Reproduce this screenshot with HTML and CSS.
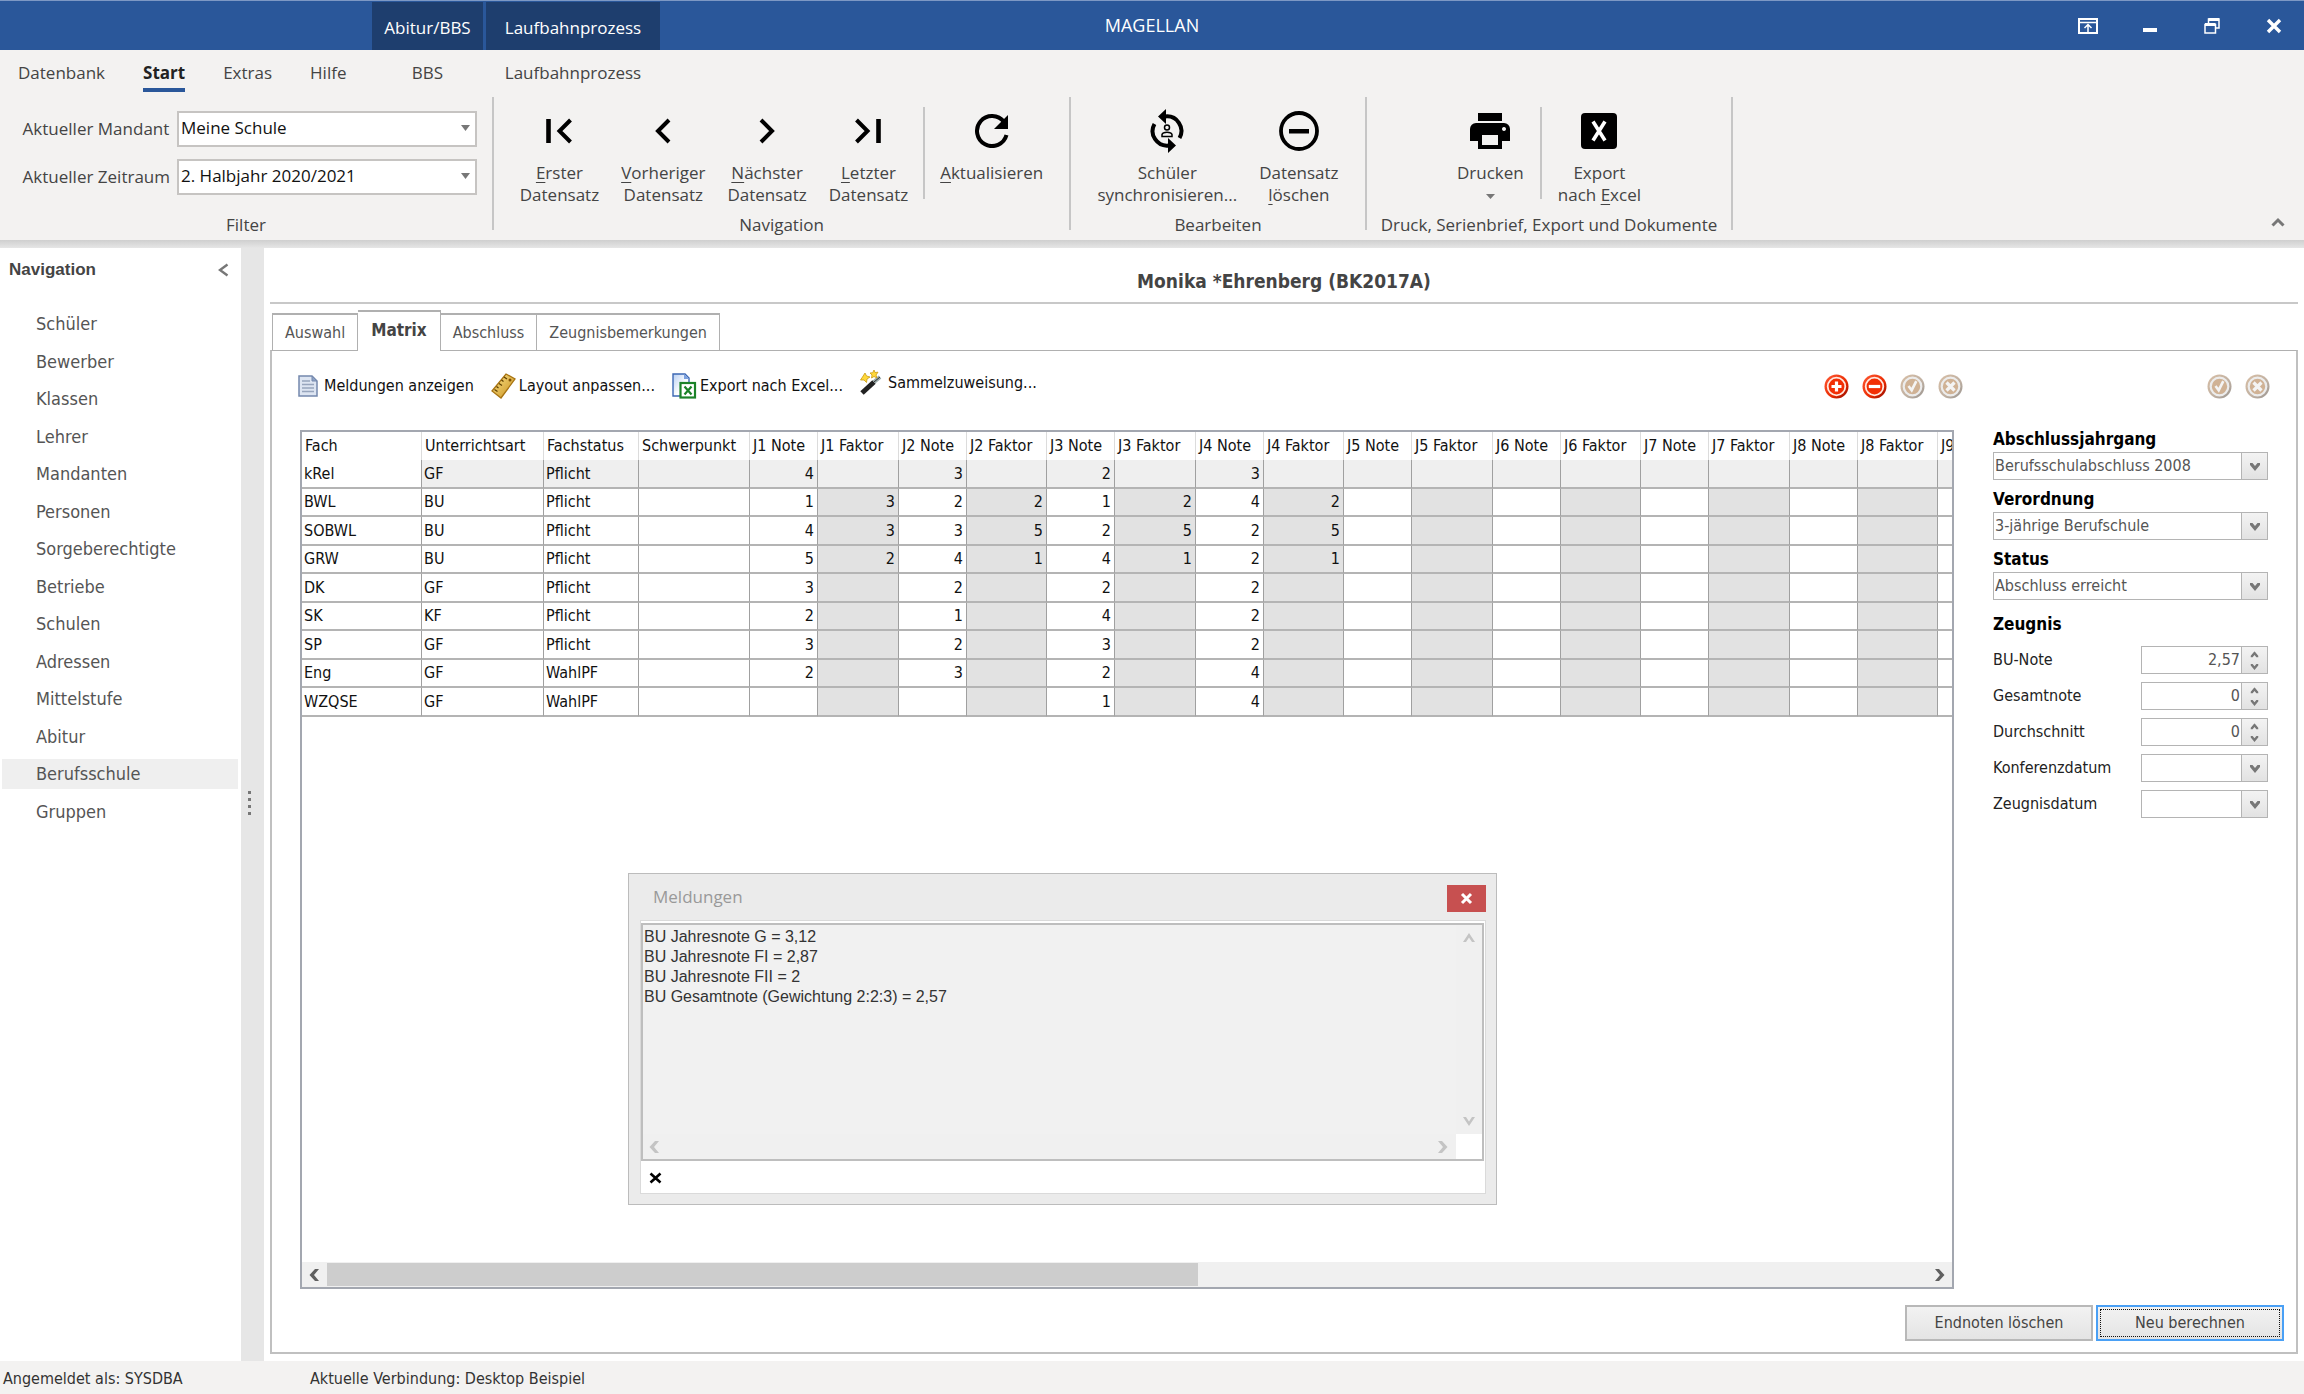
FILE: index.html
```
<!DOCTYPE html>
<html lang="de">
<head>
<meta charset="utf-8">
<title>MAGELLAN</title>
<link rel="stylesheet" href="styles.css">
</head>
<body>
<svg class="defs" aria-hidden="true">
  <defs>
    <linearGradient id="red" x1="0" y1="0" x2="1" y2="1"><stop offset="0" stop-color="#ff5a36"/><stop offset=".6" stop-color="#ea2a00"/><stop offset="1" stop-color="#8c0a00"/></linearGradient>
    <linearGradient id="tan" x1="0" y1="0" x2="1" y2="1"><stop offset="0" stop-color="#d9bfa5"/><stop offset=".6" stop-color="#bfb0a2"/><stop offset="1" stop-color="#97928e"/></linearGradient>
    <linearGradient id="gold" x1="0" y1="0" x2="1" y2="1"><stop offset="0" stop-color="#fbe48a"/><stop offset="1" stop-color="#c98f1c"/></linearGradient>
    <linearGradient id="sheet" x1="0" y1="0" x2="1" y2="1"><stop offset="0" stop-color="#b9d0f2"/><stop offset=".6" stop-color="#ffffff"/></linearGradient>
    <symbol id="add" viewBox="0 0 25 25"><circle cx="12.500" cy="12.500" r="12" fill="url(#red)"/><circle cx="12.500" cy="12.500" r="8.800" fill="#f22f05" stroke="#ffe9e0" stroke-width="1.800"/><path d="M12.500 7.500v10M7.500 12.500h10" stroke="#fff" stroke-width="3.200"/></symbol>
    <symbol id="remove" viewBox="0 0 25 25"><circle cx="12.500" cy="12.500" r="12" fill="url(#red)"/><circle cx="12.500" cy="12.500" r="8.800" fill="#f22f05" stroke="#ffe9e0" stroke-width="1.800"/><path d="M6.800 12.500h11.400" stroke="#fff" stroke-width="3.200"/></symbol>
    <symbol id="ok" viewBox="0 0 25 25"><circle cx="12.500" cy="12.500" r="12" fill="url(#tan)"/><circle cx="12.500" cy="12.500" r="8.800" fill="#d0b295" stroke="#ececec" stroke-width="2.200"/><path d="M8.500 12l3.200 4.200 4.600-9" fill="none" stroke="#f4f4f4" stroke-width="2.600"/></symbol>
    <symbol id="no" viewBox="0 0 25 25"><circle cx="12.500" cy="12.500" r="12" fill="url(#tan)"/><circle cx="12.500" cy="12.500" r="8.800" fill="#d0b295" stroke="#ececec" stroke-width="2.200"/><path d="M8.500 8.500l8 8M16.500 8.500l-8 8" stroke="#f4f4f4" stroke-width="3.200"/></symbol>
    <symbol id="down" viewBox="0 0 12 9"><path d="M1 1h2.500L6 4l2.500-3H11v2L6 9 1 3z" fill="#777"/></symbol>
    <symbol id="left" viewBox="0 0 10 12"><path d="M6 0h4L5 6l5 6H6L.5 6z" fill="currentColor"/></symbol>
  </defs>
</svg>

<header class="titlebar">
  <div class="context-tabs"><span class="ctx ctx-a">Abitur/BBS</span><span class="ctx ctx-b">Laufbahnprozess</span></div>
  <h1 class="app-name">MAGELLAN</h1>
  <div class="window-controls">
    <button aria-label="Menüband anzeigen"><svg width="20" height="16" viewBox="0 0 20 16" fill="none" stroke="#fff"><path d="M1 1h18v14H1z" stroke-width="2"/><path d="M1 4.500h18M10 14V7M6.500 10L10 6.500 13.500 10" stroke-width="1.500"/></svg></button>
    <button aria-label="Minimieren"><svg width="14" height="16"><path d="M0 10h14v4H0z" fill="#fff"/></svg></button>
    <button aria-label="Verkleinern"><svg width="16" height="16" viewBox="0 0 16 16" fill="none" stroke="#fff" stroke-width="1.500"><path d="M1 6.500h10.500V15H1zM4.500 6V1H15v9h-3.500"/><path d="M1 6.500h10.500M4.500 1.500H15" stroke-width="3"/></svg></button>
    <button aria-label="Schließen"><svg width="16" height="16"><path d="M2 2l12 12M14 2L2 14" stroke="#fff" stroke-width="3.400"/></svg></button>
  </div>
</header>

<nav class="menu" aria-label="Menüband">
  <div class="menu-main"><a href="#">Datenbank</a><a href="#" class="active">Start</a><a href="#">Extras</a><a href="#">Hilfe</a></div>
  <a href="#" class="ctx-a">BBS</a><a href="#" class="ctx-b">Laufbahnprozess</a>
</nav>

<section class="ribbon">
  <div class="group group-filter">
    <div class="filters">
      <label for="mandant">Aktueller Mandant</label>
      <div class="combo"><select id="mandant"><option>Meine Schule</option></select><svg width="9" height="6"><path d="M0 0h9L4.500 6z" fill="#777"/></svg></div>
      <label for="zeitraum">Aktueller Zeitraum</label>
      <div class="combo"><select id="zeitraum"><option>2. Halbjahr 2020/2021</option></select><svg width="9" height="6"><path d="M0 0h9L4.500 6z" fill="#777"/></svg></div>
    </div>
    <div class="group-label">Filter</div>
  </div>
  <span class="rule"></span>
  <div class="group group-nav">
    <div class="tools">
      <button class="tool"><svg width="26" height="26" fill="none" stroke="#000"><path d="M2.500 1v24" stroke-width="4.600"/><path d="M24.500 2L13.500 13l11 11" stroke-width="4"/></svg><span><u>E</u>rster<br>Datensatz</span></button>
      <button class="tool"><svg width="16" height="26" fill="none" stroke="#000"><path d="M14 2L3 13l11 11" stroke-width="4"/></svg><span><u>V</u>orheriger<br>Datensatz</span></button>
      <button class="tool"><svg width="16" height="26" fill="none" stroke="#000"><path d="M2 2l11 11L2 24" stroke-width="4"/></svg><span><u>N</u>ächster<br>Datensatz</span></button>
      <button class="tool"><svg width="26" height="26" fill="none" stroke="#000"><path d="M23.500 1v24" stroke-width="4.600"/><path d="M1.500 2l11 11-11 11" stroke-width="4"/></svg><span><u>L</u>etzter<br>Datensatz</span></button>
      <span class="rule rule-small"></span>
      <button class="tool"><svg width="34" height="34" viewBox="0 0 34 34"><path d="M29 8A15 15 0 1 0 31.500 21" fill="none" stroke="#000" stroke-width="4"/><path d="M33 1v14H19z"/></svg><span><u>A</u>ktualisieren</span></button>
    </div>
    <div class="group-label">Navigation</div>
  </div>
  <span class="rule"></span>
  <div class="group group-edit">
    <div class="tools">
      <button class="tool"><svg width="34" height="44" viewBox="0 0 34 44"><g fill="none" stroke="#000" stroke-width="4"><path d="M15 7.500A14.500 14.500 0 0 1 29.500 29"/><path d="M19 36.500A14.500 14.500 0 0 1 4.500 15"/></g><path d="M16 0v15L8 7.500zM18 29v15l8-7.500z"/><g fill="none" stroke="#000" stroke-width="1.500"><circle cx="17" cy="18.500" r="2.500"/><path d="M12 27.500v-2c1-3 9-3 10 0v2z"/></g></svg><span>Schüler<br>synchronisieren...</span></button>
      <button class="tool"><svg width="40" height="40" viewBox="0 0 40 40"><circle cx="20" cy="20" r="18" fill="none" stroke="#000" stroke-width="3.800"/><path d="M10 18h20v4.500H10z"/></svg><span>Datensatz<br><u>l</u>öschen</span></button>
    </div>
    <div class="group-label">Bearbeiten</div>
  </div>
  <span class="rule"></span>
  <div class="group group-print">
    <div class="tools">
      <button class="tool"><svg width="40" height="36" viewBox="0 0 40 36"><path fill-rule="evenodd" d="M8 0h24v8H8zM6 10h28a6 6 0 0 1 6 6v12h-8v8H8v-8H0V16a6 6 0 0 1 6-6zm6 12v10h16V22zM34 14a2 2 0 1 0 .01 0z"/></svg><span>Drucken</span><svg class="caret" width="9" height="5"><path d="M0 0h9L4.500 5z" fill="#777"/></svg></button>
      <span class="rule rule-small"></span>
      <button class="tool"><svg width="36" height="36" viewBox="0 0 36 36"><rect width="36" height="36" rx="4"/><path d="M12 8.500l12 19M24 8.500l-12 19" stroke="#fff" stroke-width="3.600"/></svg><span>Export<br>nach <u>E</u>xcel</span></button>
    </div>
    <div class="group-label">Druck, Serienbrief, Export und Dokumente</div>
  </div>
  <span class="rule"></span>
  <button class="collapse" aria-label="Menüband reduzieren"><svg width="14" height="10"><path d="M1.500 8.500L7 3l5.500 5.500" fill="none" stroke="#777" stroke-width="3"/></svg></button>
</section>

<div class="workspace">
  <aside class="sidebar">
    <div class="sidebar-head"><h2>Navigation</h2><button aria-label="Navigation einklappen"><svg width="11" height="14"><path d="M9.500 1.500L2 7l7.500 5.500" fill="none" stroke="#777" stroke-width="2.400"/></svg></button></div>
    <nav class="modules" aria-label="Module">
      <a href="#">Schüler</a><a href="#">Bewerber</a><a href="#">Klassen</a><a href="#">Lehrer</a><a href="#">Mandanten</a><a href="#">Personen</a><a href="#">Sorgeberechtigte</a><a href="#">Betriebe</a><a href="#">Schulen</a><a href="#">Adressen</a><a href="#">Mittelstufe</a><a href="#">Abitur</a><a href="#" class="selected">Berufsschule</a><a href="#">Gruppen</a>
    </nav>
  </aside>
  <div class="splitter"><span></span><span></span><span></span><span></span></div>

  <main class="content">
    <h2 class="person">Monika *Ehrenberg (BK2017A)</h2>
    <div class="tabs" role="tablist">
      <button role="tab">Auswahl</button><button role="tab" class="current" aria-selected="true">Matrix</button><button role="tab">Abschluss</button><button role="tab">Zeugnisbemerkungen</button>
    </div>
    <section class="panel">
      <div class="toolbar">
        <button class="action"><svg width="26" height="26" viewBox="0 0 26 26"><path d="M1 3h13l5 5v15H1z" fill="#dde5f2" stroke="#7488ad" stroke-width="1.500"/><path d="M14 3v5h5z" fill="#8ea3c6" stroke="#7488ad"/><path d="M4 8h8M4 11.500h12M4 15h12M4 18.500h12" stroke="#97a5bd" stroke-width="1.400"/></svg>Meldungen anzeigen</button>
        <button class="action"><svg width="28" height="26" viewBox="0 0 28 26"><path d="M15 1l9 5-14 19-9-7z" fill="url(#gold)" stroke="#a87412" stroke-width="1.300"/><path d="M13 4l3 2M10.500 7l2 1.500M8 10.500l3 2M5.500 13.500l2 1.500M3.500 16.500l3 2" stroke="#604000" stroke-width="1.300"/><circle cx="19" cy="7" r="1.500" fill="#805000"/></svg>Layout anpassen...</button>
        <button class="action"><svg width="28" height="26" viewBox="0 0 28 26"><path d="M1 1h12l4 4v18H1z" fill="url(#sheet)" stroke="#3d68b4" stroke-width="1.400"/><path d="M12 1l5 5h-5z" fill="#7ba0de"/><rect x="8.500" y="10" width="14.500" height="14.500" fill="#fff" stroke="#1b8228" stroke-width="2.200"/><path d="M12.500 13.500l7 8M19.500 13.500l-7 8" stroke="#1b8228" stroke-width="2.200"/></svg>Export nach Excel...</button>
        <button class="action action-raised"><svg width="28" height="26" viewBox="0 0 28 26"><path d="M2 23L14 12" stroke="#222" stroke-width="5"/><path d="M14 12l6-5" stroke="#9aa" stroke-width="4"/><path d="M14 12l6-5" stroke="#333" stroke-width="1"/><g fill="#ffd83a" stroke="#c99b12" stroke-width=".8"><path d="M5 3l1.500 3L10 7 7 9l-.5 3.500L4 10 .5 10l2-3z"/><path d="M14 0l1 2.500 3-.3L16 5l1 3-3-1.500L11.500 8l.5-3-2-2 2.700-.3z"/></g></svg>Sammelzuweisung...</button>
        <div class="rounds rounds-grid">
          <button aria-label="Hinzufügen"><svg width="25" height="25"><use href="#add"/></svg></button><button aria-label="Entfernen"><svg width="25" height="25"><use href="#remove"/></svg></button><button aria-label="Übernehmen"><svg width="25" height="25"><use href="#ok"/></svg></button><button aria-label="Verwerfen"><svg width="25" height="25"><use href="#no"/></svg></button>
        </div>
        <div class="rounds">
          <button aria-label="Speichern"><svg width="25" height="25"><use href="#ok"/></svg></button><button aria-label="Abbrechen"><svg width="25" height="25"><use href="#no"/></svg></button>
        </div>
      </div>

      <div class="body">
        <div class="grid">
          <div class="grid-view">
          <table>
            <colgroup><col class="w-fach"><col class="w-art"><col class="w-status"><col class="w-schwer"><col class="w-note"><col class="w-faktor"><col class="w-note"><col class="w-faktor-b"><col class="w-note"><col class="w-faktor"><col class="w-note"><col class="w-faktor-b"><col class="w-note"><col class="w-faktor"><col class="w-note"><col class="w-faktor-b"><col class="w-note"><col class="w-faktor"><col class="w-note"><col class="w-faktor-b"><col class="w-note"></colgroup>
            <thead><tr><th>Fach</th><th>Unterrichtsart</th><th>Fachstatus</th><th>Schwerpunkt</th><th>J1 Note</th><th>J1 Faktor</th><th>J2 Note</th><th>J2 Faktor</th><th>J3 Note</th><th>J3 Faktor</th><th>J4 Note</th><th>J4 Faktor</th><th>J5 Note</th><th>J5 Faktor</th><th>J6 Note</th><th>J6 Faktor</th><th>J7 Note</th><th>J7 Faktor</th><th>J8 Note</th><th>J8 Faktor</th><th>J9 Note</th></tr></thead>
            <tbody>
              <tr class="focused"><td>kRel</td><td>GF</td><td>Pflicht</td><td></td><td>4</td><td></td><td>3</td><td></td><td>2</td><td></td><td>3</td><td></td><td></td><td></td><td></td><td></td><td></td><td></td><td></td><td></td><td></td></tr>
              <tr><td>BWL</td><td>BU</td><td>Pflicht</td><td></td><td>1</td><td>3</td><td>2</td><td>2</td><td>1</td><td>2</td><td>4</td><td>2</td><td></td><td></td><td></td><td></td><td></td><td></td><td></td><td></td><td></td></tr>
              <tr><td>SOBWL</td><td>BU</td><td>Pflicht</td><td></td><td>4</td><td>3</td><td>3</td><td>5</td><td>2</td><td>5</td><td>2</td><td>5</td><td></td><td></td><td></td><td></td><td></td><td></td><td></td><td></td><td></td></tr>
              <tr><td>GRW</td><td>BU</td><td>Pflicht</td><td></td><td>5</td><td>2</td><td>4</td><td>1</td><td>4</td><td>1</td><td>2</td><td>1</td><td></td><td></td><td></td><td></td><td></td><td></td><td></td><td></td><td></td></tr>
              <tr><td>DK</td><td>GF</td><td>Pflicht</td><td></td><td>3</td><td></td><td>2</td><td></td><td>2</td><td></td><td>2</td><td></td><td></td><td></td><td></td><td></td><td></td><td></td><td></td><td></td><td></td></tr>
              <tr><td>SK</td><td>KF</td><td>Pflicht</td><td></td><td>2</td><td></td><td>1</td><td></td><td>4</td><td></td><td>2</td><td></td><td></td><td></td><td></td><td></td><td></td><td></td><td></td><td></td><td></td></tr>
              <tr><td>SP</td><td>GF</td><td>Pflicht</td><td></td><td>3</td><td></td><td>2</td><td></td><td>3</td><td></td><td>2</td><td></td><td></td><td></td><td></td><td></td><td></td><td></td><td></td><td></td><td></td></tr>
              <tr><td>Eng</td><td>GF</td><td>WahlPF</td><td></td><td>2</td><td></td><td>3</td><td></td><td>2</td><td></td><td>4</td><td></td><td></td><td></td><td></td><td></td><td></td><td></td><td></td><td></td><td></td></tr>
              <tr><td>WZQSE</td><td>GF</td><td>WahlPF</td><td></td><td></td><td></td><td></td><td></td><td>1</td><td></td><td>4</td><td></td><td></td><td></td><td></td><td></td><td></td><td></td><td></td><td></td><td></td></tr>
            </tbody>
          </table>
          </div>
          <div class="hscroll"><svg width="10" height="12"><use href="#left"/></svg><div class="track"><div class="thumb"></div></div><svg class="flip" width="10" height="12"><use href="#left"/></svg></div>
        </div>

        <form class="details">
          <div class="field"><label for="jahrgang">Abschlussjahrgang</label><div class="box"><select id="jahrgang"><option>Berufsschulabschluss 2008</option></select><span class="drop"><svg width="12" height="9"><use href="#down"/></svg></span></div></div>
          <div class="field"><label for="verordnung">Verordnung</label><div class="box"><select id="verordnung"><option>3-jährige Berufschule</option></select><span class="drop"><svg width="12" height="9"><use href="#down"/></svg></span></div></div>
          <div class="field"><label for="status">Status</label><div class="box"><select id="status"><option>Abschluss erreicht</option></select><span class="drop"><svg width="12" height="9"><use href="#down"/></svg></span></div></div>
          <h3>Zeugnis</h3>
          <div class="line"><label for="bu">BU-Note</label><div class="box"><input id="bu" type="text" value="2,57"><span class="drop spin"><svg class="turn" width="9" height="7" viewBox="0 0 12 9"><use href="#down"/></svg><svg width="9" height="7" viewBox="0 0 12 9"><use href="#down"/></svg></span></div></div>
          <div class="line"><label for="gesamt">Gesamtnote</label><div class="box"><input id="gesamt" type="text" value="0"><span class="drop spin"><svg class="turn" width="9" height="7" viewBox="0 0 12 9"><use href="#down"/></svg><svg width="9" height="7" viewBox="0 0 12 9"><use href="#down"/></svg></span></div></div>
          <div class="line"><label for="schnitt">Durchschnitt</label><div class="box"><input id="schnitt" type="text" value="0"><span class="drop spin"><svg class="turn" width="9" height="7" viewBox="0 0 12 9"><use href="#down"/></svg><svg width="9" height="7" viewBox="0 0 12 9"><use href="#down"/></svg></span></div></div>
          <div class="line"><label for="konferenz">Konferenzdatum</label><div class="box"><input id="konferenz" type="text"><span class="drop"><svg width="12" height="9"><use href="#down"/></svg></span></div></div>
          <div class="line"><label for="zdatum">Zeugnisdatum</label><div class="box"><input id="zdatum" type="text"><span class="drop"><svg width="12" height="9"><use href="#down"/></svg></span></div></div>
        </form>
      </div>

      <div class="commands"><button>Endnoten löschen</button><button class="default"><span>Neu berechnen</span></button></div>
    </section>
  </main>
</div>

<section class="dialog" role="dialog" aria-labelledby="dlg-title">
  <div class="dialog-head"><h2 id="dlg-title">Meldungen</h2><button aria-label="Fenster schließen"><svg width="13" height="13"><path d="M2 2l9 9M11 2l-9 9" stroke="#fff" stroke-width="3"/></svg></button></div>
  <div class="dialog-body">
    <div class="log">
      <textarea aria-label="Meldungstext" readonly>BU Jahresnote G = 3,12
BU Jahresnote FI = 2,87
BU Jahresnote FII = 2
BU Gesamtnote (Gewichtung 2:2:3) = 2,57</textarea>
      <div class="vbar"><svg class="turn" width="12" height="9" viewBox="0 0 12 9"><path d="M0 0h3l3 4.500L9 0h3L6 9z" fill="#c4c4c4"/></svg><svg width="12" height="9" viewBox="0 0 12 9"><path d="M0 0h3l3 4.500L9 0h3L6 9z" fill="#c4c4c4"/></svg></div>
      <div class="hbar"><svg width="10" height="12"><use href="#left"/></svg><svg class="flip" width="10" height="12"><use href="#left"/></svg></div>
    </div>
    <button class="dismiss" aria-label="Meldungen ausblenden"><svg width="13" height="12"><path d="M1.500 1.500l10 9M11.500 1.500l-10 9" stroke="#000" stroke-width="2.600"/></svg></button>
  </div>
</section>

<footer class="statusbar"><span class="user">Angemeldet als: SYSDBA</span><span>Aktuelle Verbindung: Desktop Beispiel</span></footer>
</body>
</html>
```
FILE: styles.css
```
:root {
  --ui: "Open Sans", "Noto Sans", sans-serif;
  --form: "DejaVu Sans Condensed", "DejaVu Sans", sans-serif;
  --blue: #2a579a;
  --navy: #1e3e6e;
  --bar: #f3f2f1;
  --line: #b4b4b4;
}
* { box-sizing: border-box; }
body {
  margin: 0;
  min-height: 100vh;
  display: flex;
  flex-direction: column;
  position: relative;
  background: #fff;
  color: #222;
  font: 16px/20px var(--form);
}
button, select, input, textarea { font: inherit; color: inherit; margin: 0; padding: 0; border: 0; background: none; }
select { appearance: none; outline: 0; }
a { color: inherit; text-decoration: none; }
h1, h2, h3 { margin: 0; }
svg { display: block; flex: none; }
.defs { position: absolute; width: 0; height: 0; }
.flip { transform: rotate(180deg); }
.turn { transform: rotate(180deg); }

/* title bar */
.titlebar {
  height: 50px;
  display: grid;
  grid-template-columns: 1fr auto 1fr;
  background: var(--blue);
  border-top: 1px solid #7d98c4;
  color: #fff;
  font-family: var(--ui);
}
.context-tabs { display: flex; gap: 3px; padding: 1px 0 0 372px; }
.ctx-a { width: 111px; }
.ctx-b { width: 174px; }
.ctx { background: var(--navy); text-align: center; font-size: 17px; line-height: 52px; height: 48px; }
.app-name { font-size: 18px; line-height: 48px; font-weight: 400; }
.window-controls { display: flex; justify-content: flex-end; gap: 2px; }
.window-controls button { width: 60px; display: grid; place-items: center; }

/* menu */
.menu { display: flex; gap: 3px; height: 46px; background: var(--bar); color: #444; font: 17px/46px var(--ui); }
.menu > a { text-align: center; }
.menu-main { display: flex; gap: 38px; width: 369px; padding-left: 18px; }
.menu .active { font-weight: 700; color: #222; background: linear-gradient(var(--blue), var(--blue)) 0 38px / 100% 4px no-repeat; }

/* ribbon */
.ribbon {
  display: flex;
  height: 152px;
  background: linear-gradient(#cfcfcf, #e6e6e6) 0 100% / 100% 8px no-repeat var(--bar);
  color: #444;
  font: 17px/22px var(--ui);
}
.rule { width: 2px; height: 133px; margin-top: 1px; background: #c6c6c6; flex: none; }
.rule-small { height: 92px; margin: 11px -6px 0; }
.group { display: flex; flex-direction: column; height: 140px; justify-content: space-between; }
.group-label { text-align: center; }
.group-filter { width: 492px; }
.group-nav { width: 575px; }
.group-edit { width: 294px; }
.group-print { width: 364px; }
.filters { display: grid; grid-template-columns: auto 300px; grid-auto-rows: 36px; gap: 12px 7px; padding: 15px 15px 0 0; justify-content: end; align-items: center; }
.combo { display: flex; align-items: center; height: 36px; padding: 0 5px 2px 2px; background: #fff; border: 2px solid #c6c4c2; color: #111; }
.combo select { flex: 1; line-height: 28px; height: 30px; }
.tools { display: flex; justify-content: center; gap: 22px; }
.group-nav .rule-small { margin: 11px -7px 0; }
.tool { display: grid; grid-template-rows: 46px auto; justify-items: center; align-content: start; gap: 8px; padding-top: 12px; }
.tool svg { align-self: center; }
.tool .caret { margin-top: 2px; }
.tool u { text-underline-offset: 3px; }
.collapse { margin: 121px 19px 0 auto; align-self: flex-start; }

/* side navigation */
.workspace { flex: 1; display: flex; }
.sidebar { width: 241px; padding: 0 3px 0 2px; color: #555; }
.sidebar-head { display: flex; justify-content: space-between; align-items: center; height: 44px; padding: 0 9px 0 7px; }
.sidebar-head h2 { font: bold 17px/20px "Liberation Sans", Arial, sans-serif; color: #444; }
.modules { display: flex; flex-direction: column; justify-content: space-between; height: 518px; margin-top: 17px; font-size: 18px; line-height: 30px; }
.modules a { padding-left: 34px; }
.modules .selected { background: #efefef; }
.splitter { width: 23px; background: #e6e6e6; display: flex; flex-direction: column; justify-content: center; gap: 4px; padding: 0 0 4px 7px; }
.splitter span { width: 3px; height: 3px; background: #777; }

/* content */
.content { flex: 1; min-width: 0; display: flex; flex-direction: column; padding: 0 6px 7px 6px; }
.person { font-size: 19px; line-height: 42px; padding-top: 12px; text-align: center; color: #444; border-bottom: 2px solid #c8c8c8; }
.tabs { display: flex; align-items: flex-end; height: 46px; padding-left: 2px; color: #555; }
.tabs button { height: 37px; padding: 0 12px; border: solid #b0b0b0; border-width: 2px 1px 0; }
.tabs button + button { border-left-width: 0; }
.tabs .current { height: 41px; margin: 0 0 -1px; border-left-width: 0; padding: 0 13px 4px; font-size: 17px; font-weight: 700; color: #444; background: #fff; z-index: 1; }
.panel { flex: 1; display: flex; flex-direction: column; border: 2px solid #c0c0c0; border-top: 1px solid #b0b0b0; padding-bottom: 11px; }
.toolbar { display: flex; align-items: center; gap: 17px; height: 79px; padding: 0 26px 9px 26px; color: #111; }
.action { display: flex; align-items: center; }
.action-raised { padding-bottom: 7px; }
.rounds { display: flex; gap: 13px; }
.rounds-grid { margin-left: auto; margin-right: 227px; }
.body { flex: 1; display: flex; gap: 39px; padding: 0 28px; }
.grid { flex: 1; min-width: 0; display: flex; flex-direction: column; border: 2px solid #a3a7b0; }
.grid-view { flex: 1; overflow: hidden; }
.w-fach { width: 120px; }
.w-art { width: 122px; }
.w-status { width: 95px; }
.w-schwer { width: 111px; }
.w-note { width: 68px; }
.w-faktor { width: 81px; }
.w-faktor-b { width: 80px; }
table { table-layout: fixed; width: 1704px; border-collapse: separate; border-spacing: 0; color: #111; }
th { height: 28px; padding: 0 0 0 3px; text-align: left; font-weight: 400; white-space: nowrap; border-right: 1px solid #dcdcdc; }
td { height: 28px; padding: 0 2px; border-right: 1px solid #a0a0a0; border-bottom: 2px solid #b4b4b4; }
tr:nth-child(odd) td { height: 29px; }
td:nth-child(n+5) { text-align: right; padding-right: 3px; }
td:nth-child(n+6):nth-child(even) { background: #e2e2e2; }
.focused td:nth-child(n+2) { background: #efefef; }
.hscroll { display: flex; align-items: center; height: 25px; background: #f0f0f0; color: #606060; padding: 0 7px; gap: 8px; }
.track { flex: 1; height: 23px; }
.thumb { width: 871px; height: 23px; background: #cdcdcd; }

/* detail form */
.details { width: 275px; color: #222; }
.field { margin-bottom: 10px; }
.field label, h3 { display: block; font: bold 17px/18px var(--form); color: #000; }
.field .box { margin-top: 4px; }
h3 { margin: 15px 0 13px; }
.line { display: flex; justify-content: space-between; align-items: center; margin-bottom: 8px; }
.line .box { width: 127px; }
.box { display: flex; height: 28px; border: 1px solid var(--line); color: #555; }
.box select, .box input { flex: 1; min-width: 0; padding: 0 1px; }
.box input { text-align: right; }
.drop { width: 26px; border-left: 1px solid var(--line); background: linear-gradient(#f3f3f3, #e2e2e2); display: grid; place-content: center; }
.spin { gap: 5px; }

.commands { display: flex; justify-content: flex-end; gap: 3px; padding: 16px 12px 0 0; color: #444; }
.commands button { width: 188px; height: 36px; border: 2px solid #b8b8b8; background: linear-gradient(#f2f2f2, #e4e4e4); }
.commands .default { border-color: #4aa0f5; padding: 2px; }
.commands .default span { display: block; line-height: 26px; border: 1px dotted #111; }

/* floating message window */
.dialog { position: absolute; left: 628px; top: 873px; width: 869px; height: 332px; padding: 0 10px 10px 11px; display: flex; flex-direction: column; background: #ebebeb; border: 1px solid #bcbcbc; }
.dialog-head { display: flex; justify-content: space-between; align-items: center; height: 46px; padding-left: 13px; }
.dialog-head h2 { font: 17px/22px var(--ui); color: #999; }
.dialog-head button { width: 39px; height: 27px; margin-top: 3px; display: grid; place-items: center; background: #c75050; }
.dialog-body { flex: 1; display: flex; flex-direction: column; background: #fff; border: 1px solid #dadada; }
.log { flex: 1; margin: 2px 1px 2px 0; display: grid; grid-template-columns: 1fr 26px; grid-template-rows: 1fr 25px; border: 2px solid #bebebe; color: #c4c4c4; }
.log textarea { resize: none; overflow: hidden; outline: 0; padding: 2px 0 0 1px; background: #f1f1f1; color: #333; font: 16px/20px "Liberation Sans", Arial, sans-serif; }
.vbar, .hbar { display: flex; justify-content: space-between; align-items: center; background: #f0f0f0; }
.vbar { flex-direction: column; padding: 8px 0; }
.hbar { padding: 0 8px 0 6px; }
.dismiss { align-self: flex-start; padding: 9px 0 9px 8px; }

.statusbar { display: flex; height: 33px; padding-left: 3px; background: var(--bar); color: #333; line-height: 35px; }
.user { width: 307px; }
```
